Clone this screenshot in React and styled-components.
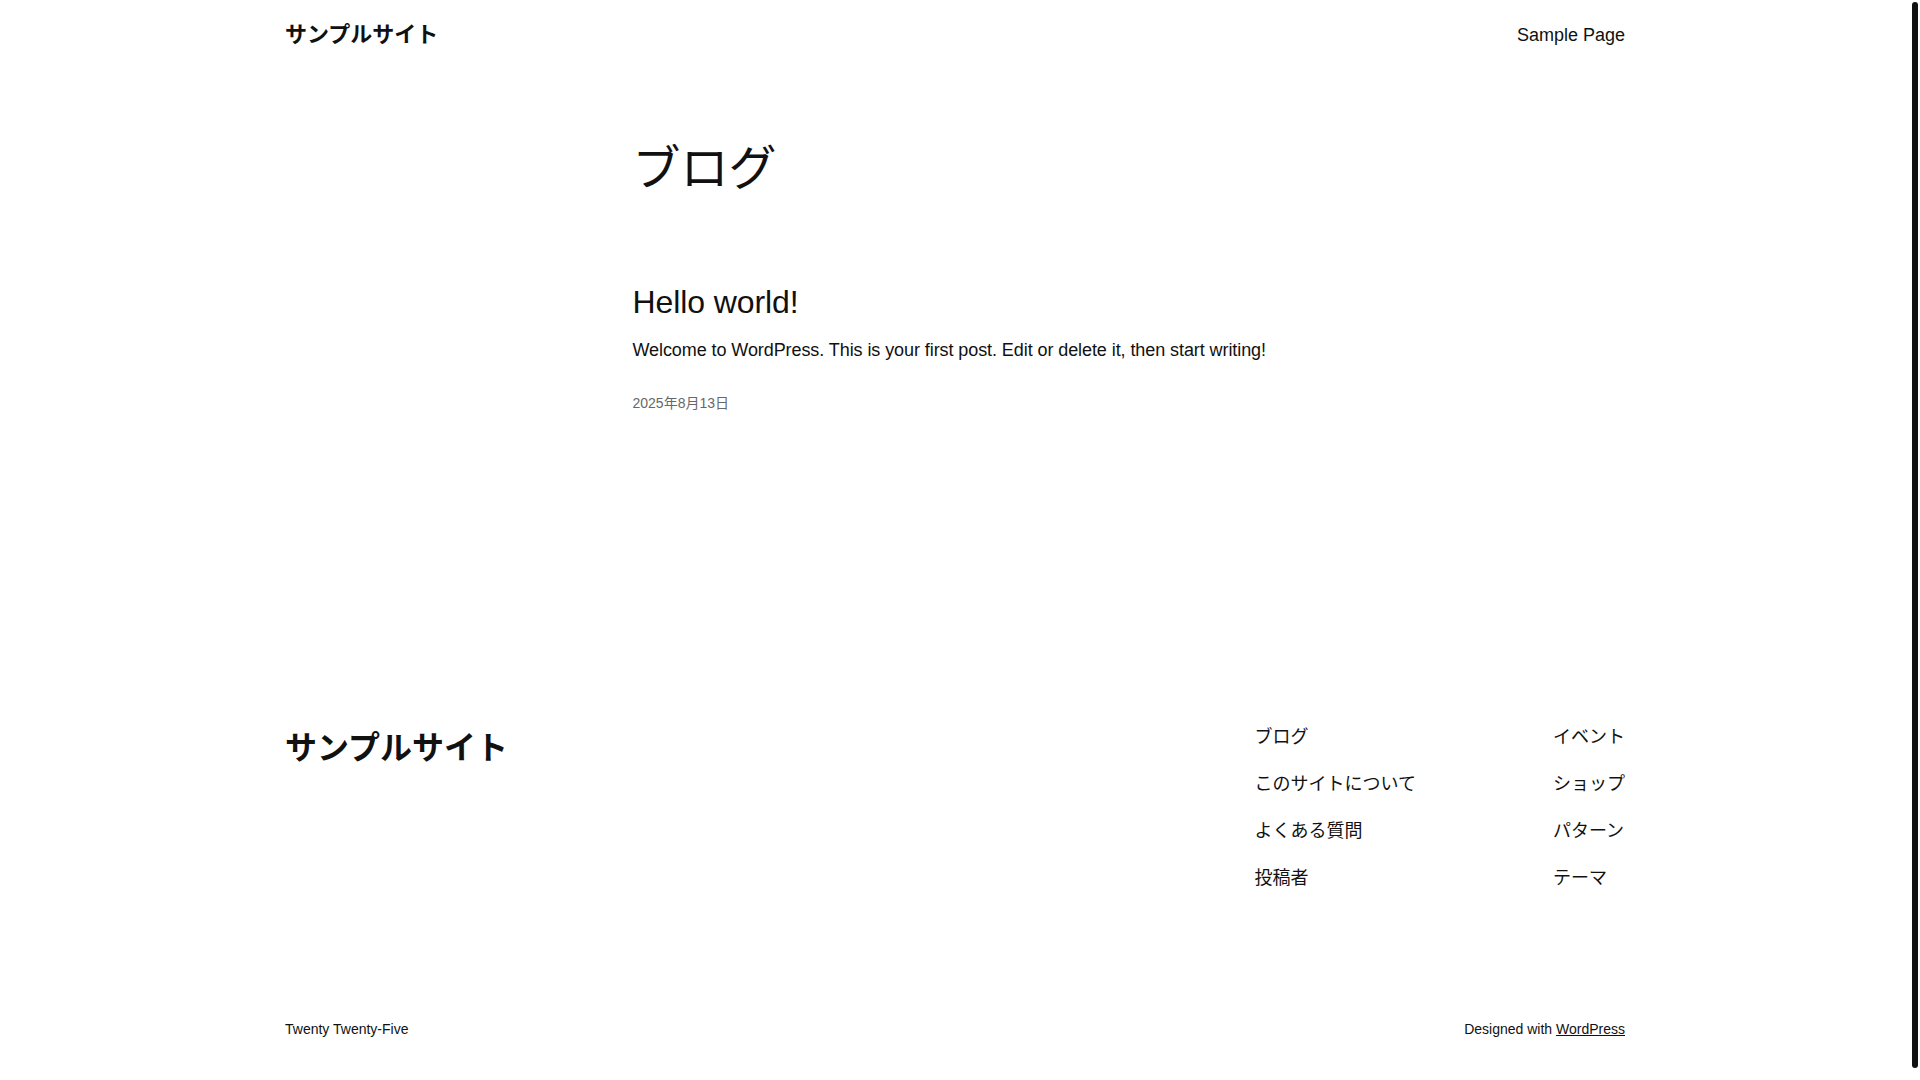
import styled, { createGlobalStyle } from "styled-components";

const GlobalStyle = createGlobalStyle`
  html, body {
    margin: 0;
    padding: 0;
    background: #fff;
  }

  body {
    font-family: "Liberation Sans", "Noto Sans CJK JP", sans-serif;
    color: #111111;
    -webkit-font-smoothing: antialiased;
  }
`;

// browser window: page on the left, scrollbar strip on the right
const Shell = styled.div`
  display: flex;
  min-height: 100vh;
`;

const Page = styled.div`
  flex: 1;
  min-width: 0;
  padding-bottom: 36px;
`;

const ScrollTrack = styled.aside`
  flex-shrink: 0;
  width: 10px;
  height: 100vh;
  box-sizing: border-box;
  padding: 2px;
  background: #fff;
`;

const ScrollThumb = styled.div`
  height: 1066px;
  border-radius: 3px;
  background: #111;
`;

const Wide = styled.div`
  max-width: 1340px;
  margin: 0 auto;
`;

const Header = styled.header`
  max-width: 1340px;
  margin: 0 auto;
  height: 70px;
  display: flex;
  justify-content: space-between;
  align-items: center;
`;

const SiteTitle = styled.a`
  font-size: ${(p) => p.$size}px;
  line-height: ${(p) => p.$lh};
  font-weight: 700;
  color: #111;
  text-decoration: none;
`;

const TopNav = styled.nav`
  display: flex;
  gap: 24px;
  margin-top: 2px;
`;

const NavLink = styled.a`
  font-size: 18px;
  line-height: 1.4;
  color: #111;
  text-decoration: none;
`;

const Main = styled.main`
  width: 645px;
  margin: 0 auto;
  padding-top: 70px;
`;

const PageTitle = styled.h1`
  margin: 0;
  font-size: 48px;
  line-height: 1.2;
  font-weight: 400;
`;

const Post = styled.article`
  margin-top: 85px;
`;

const PostTitle = styled.h2`
  margin: 0;
  font-size: 32px;
  line-height: 1.2;
  font-weight: 400;
  letter-spacing: -0.1px;
`;

const Excerpt = styled.p`
  margin: 15px 0 0;
  font-size: 18px;
  line-height: 1.6;
  letter-spacing: -0.08px;
`;

const PostDate = styled.time`
  display: block;
  margin-top: 27px;
  font-size: 14px;
  line-height: 1.6;
  color: #686868;
`;

const Footer = styled.footer`
  padding-top: 309px;
`;

const FooterTop = styled.div`
  display: flex;
  justify-content: space-between;
  align-items: flex-start;
`;

const FooterNav = styled.nav`
  display: flex;
  gap: 137px;
`;

const NavColumn = styled.ul`
  list-style: none;
  margin: 0;
  padding: 0;
  display: flex;
  flex-direction: column;
  gap: 18px;
`;

const FooterLink = styled.a`
  display: block;
  font-size: 18px;
  line-height: 1.6;
  color: #111;
  text-decoration: none;
`;

const FooterBottom = styled.div`
  margin-top: 126px;
  display: flex;
  justify-content: space-between;
  align-items: center;
`;

const Credit = styled.p`
  margin: 0;
  font-size: 14px;
  line-height: 1.6;

  a {
    color: #111;
    text-decoration: underline;
    text-underline-offset: 1px;
  }
`;

const leftLinks = ["ブログ", "このサイトについて", "よくある質問", "投稿者"];
const rightLinks = ["イベント", "ショップ", "パターン", "テーマ"];

export default function App() {
  return (
    <>
      <GlobalStyle />
      <Shell>
        <Page>
          <Header>
            <SiteTitle href="#" $size={22} $lh={1.4}>
              サンプルサイト
            </SiteTitle>
            <TopNav>
              <NavLink href="#">Sample Page</NavLink>
            </TopNav>
          </Header>

          <Main>
            <PageTitle>ブログ</PageTitle>
            <Post>
              <PostTitle>Hello world!</PostTitle>
              <Excerpt>
                Welcome to WordPress. This is your first post. Edit or delete
                it, then start writing!
              </Excerpt>
              <PostDate dateTime="2025-08-13">2025年8月13日</PostDate>
            </Post>
          </Main>

          <Footer>
            <Wide>
              <FooterTop>
                <SiteTitle href="#" $size={32} $lh={1.6}>
                  サンプルサイト
                </SiteTitle>
                <FooterNav>
                  <NavColumn>
                    {leftLinks.map((label) => (
                      <li key={label}>
                        <FooterLink href="#">{label}</FooterLink>
                      </li>
                    ))}
                  </NavColumn>
                  <NavColumn>
                    {rightLinks.map((label) => (
                      <li key={label}>
                        <FooterLink href="#">{label}</FooterLink>
                      </li>
                    ))}
                  </NavColumn>
                </FooterNav>
              </FooterTop>
              <FooterBottom>
                <Credit>Twenty Twenty-Five</Credit>
                <Credit>
                  Designed with <a href="#">WordPress</a>
                </Credit>
              </FooterBottom>
            </Wide>
          </Footer>
        </Page>
        <ScrollTrack>
          <ScrollThumb />
        </ScrollTrack>
      </Shell>
    </>
  );
}
